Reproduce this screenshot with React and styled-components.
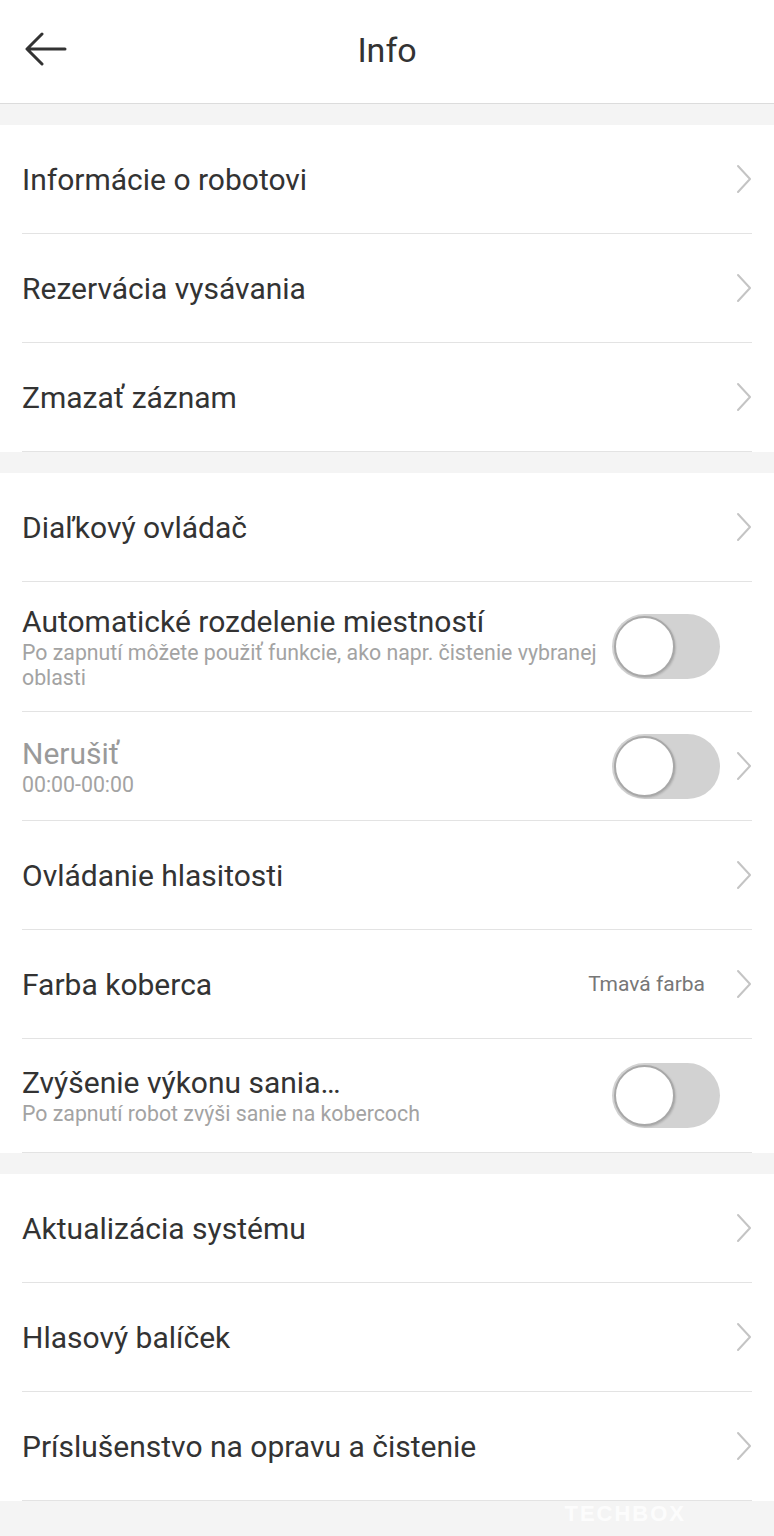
import React from "react";
import styled, { createGlobalStyle } from "styled-components";

const Global = createGlobalStyle`
  html, body { margin: 0; padding: 0; background: #f4f4f4; }
  body { font-family: Roboto, "Noto Sans", "Liberation Sans", sans-serif; }
`;

const sections = [
  [
    { title: "Informácie o robotovi", chevron: true },
    { title: "Rezervácia vysávania", chevron: true },
    { title: "Zmazať záznam", chevron: true },
  ],
  [
    { title: "Diaľkový ovládač", chevron: true },
    { title: "Automatické rozdelenie miestností", sub: "Po zapnutí môžete použiť funkcie, ako napr. čistenie vybranej oblasti", toggle: true, height: 129 },
    { title: "Nerušiť", sub: "00:00-00:00", toggle: true, chevron: true, muted: true },
    { title: "Ovládanie hlasitosti", chevron: true },
    { title: "Farba koberca", value: "Tmavá farba", chevron: true },
    { title: "Zvýšenie výkonu sania…", sub: "Po zapnutí robot zvýši sanie na kobercoch", toggle: true, height: 113 },
  ],
  [
    { title: "Aktualizácia systému", chevron: true },
    { title: "Hlasový balíček", chevron: true },
    { title: "Príslušenstvo na opravu a čistenie", chevron: true },
  ],
];

export default function App() {
  return (
    <>
      <Global />
      <Page>
        <Header>
          <Back>
            <svg width="42" height="34" viewBox="0 0 42 34" fill="none" stroke="#333" strokeWidth="3" strokeLinecap="round" strokeLinejoin="round">
              <path d="M40 17H3M17 2L2 17l15 15" />
            </svg>
          </Back>
          <Title>Info</Title>
        </Header>
        {sections.map((rows, i) => (
          <React.Fragment key={i}>
            <Gap />
            <Section>
              {rows.map((r) => (
                <Row key={r.title} $h={r.height}>
                  <TextBlock>
                    <RowTitle $muted={r.muted}>{r.title}</RowTitle>
                    {r.sub && <Sub>{r.sub}</Sub>}
                  </TextBlock>
                  {r.value && <Value>{r.value}</Value>}
                  {r.toggle && (
                    <Toggle>
                      <Knob />
                    </Toggle>
                  )}
                  <Chevron $hidden={!r.chevron} width="16" height="30" viewBox="0 0 16 30" fill="none" stroke="#c4c4c4" strokeWidth="2" strokeLinecap="round" strokeLinejoin="round">
                    <path d="M2 2l12 13L2 28" />
                  </Chevron>
                </Row>
              ))}
            </Section>
          </React.Fragment>
        ))}
        <Footer>
          <Mark>TECHBOX</Mark>
        </Footer>
      </Page>
    </>
  );
}

const Page = styled.div`width: 774px;min-height: 1536px;background: #f4f4f4;display: flex;flex-direction: column;`;
const Header = styled.div`height: 103px;background: #fff;border-bottom: 1px solid #dcdcdc;display: flex;align-items: center;justify-content: center;position: relative;`;
const Back = styled.div`position: absolute;left: 25px;top: 32px;display: flex;`;
const Title = styled.div`font-size: 34px;color: #333;margin-top: -4px;`;
const Gap = styled.div`height: 21px;`;
const Section = styled.div`background: #fff;display: flex;flex-direction: column;`;
const Row = styled.div`height: ${(p) => p.$h || 108}px;margin: 0 22px;border-bottom: 1px solid #e3e3e3;display: flex;align-items: center;`;
const TextBlock = styled.div`flex: 1;display: flex;flex-direction: column;min-width: 0;padding-right: 2px;`;
const RowTitle = styled.div`font-size: 30px;line-height: 35px;color: ${(p) => (p.$muted ? "#9a9a9a" : "#333")};`;
const Sub = styled.div`font-size: 21.3px;line-height: 25px;color: #a3a3a3;margin-top: 1px;`;
const Value = styled.div`font-size: 21px;color: #777;margin-right: 15px;`;
const Toggle = styled.div`width: 108px;height: 65px;border-radius: 33px;background: #d2d2d2;display: flex;align-items: center;padding-left: 2px;box-sizing: border-box;flex-shrink: 0;`;
const Knob = styled.div`width: 61px;height: 61px;border-radius: 50%;background: #fff;box-sizing: border-box;border: 2px solid #a8a8a8;box-shadow: 1px 1px 2px rgba(0,0,0,0.15);`;
const Chevron = styled.svg`margin-left: 16px;flex-shrink: 0;visibility: ${(p) => (p.$hidden ? "hidden" : "visible")};`;
const Footer = styled.div`flex: 1;min-height: 35px;display: flex;justify-content: flex-end;align-items: flex-start;padding-right: 88px;`;
const Mark = styled.div`font-family: "Liberation Sans", sans-serif;font-weight: bold;font-size: 22px;line-height: 26px;color: rgba(255,255,255,0.8);letter-spacing: 2px;`;
